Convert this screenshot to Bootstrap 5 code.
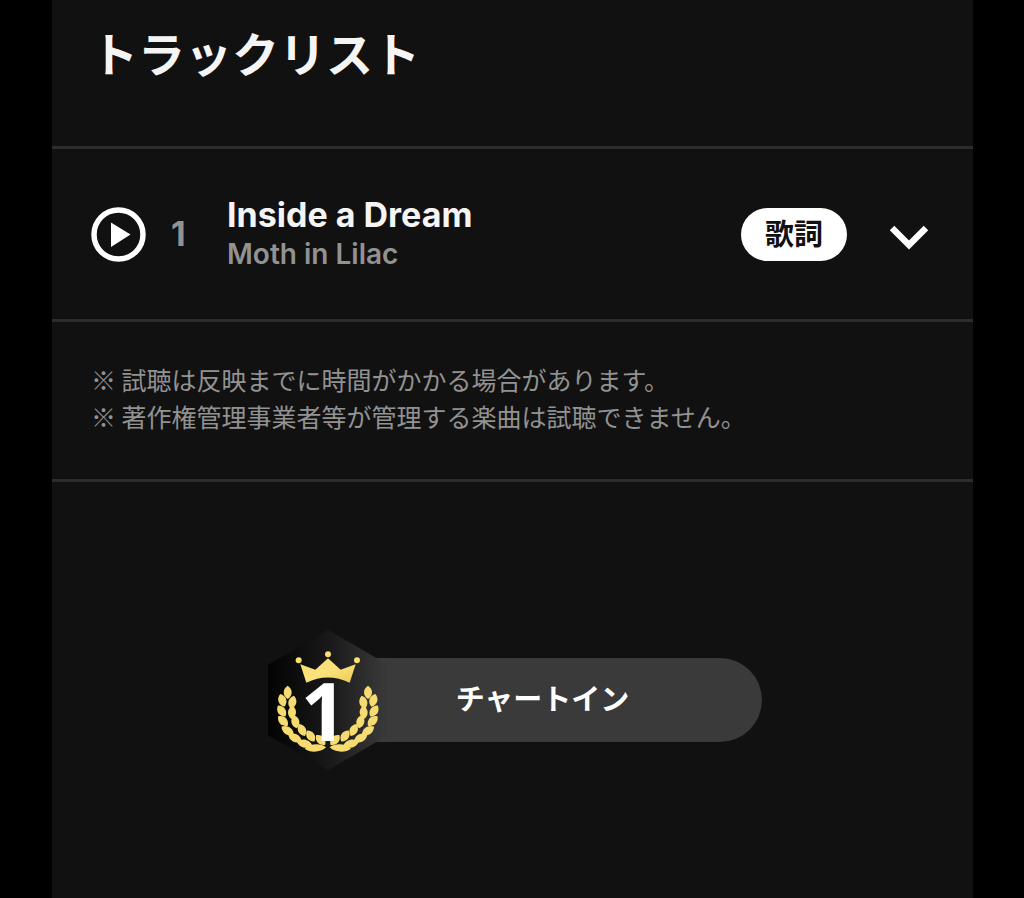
<!DOCTYPE html>
<html lang="ja" data-bs-theme="dark">
<head>
<meta charset="utf-8">
<meta name="viewport" content="width=device-width, initial-scale=1">
<title>トラックリスト</title>
<link href="https://cdn.jsdelivr.net/npm/bootstrap@5.3.0/dist/css/bootstrap.min.css" rel="stylesheet">
<style>
body { background: #000; color: #f5f5f5; font-family: Inter, "Noto Sans CJK JP", sans-serif; }
.page-frame { padding: 0 51px 0 52px; }
.panel { background: #111; }
.rule { border-bottom: 3px solid #2d2d2d; }
.side-pad { padding-left: 39px; padding-right: 45px; }
.heading { font-size: 47px; line-height: 60px; font-weight: 700; color: #f5f5f5; padding-top: 25px; padding-bottom: 61px; }
.track { padding-top: 46px; padding-bottom: 46px; }
.muted { color: #929292; }
.track-no { font-size: 34px; line-height: 40px; font-weight: 700; width: 81px; padding-left: 25px; }
.track-title { font-size: 34px; line-height: 40px; font-weight: 700; }
.track-artist { font-size: 28px; line-height: 38px; font-weight: 600; }
.bare { background: none; border: 0; padding: 0; line-height: 0; color: #fff; }
.lyrics { --bs-btn-color: #111; --bs-btn-bg: #fff; --bs-btn-hover-bg: #ddd; --bs-btn-hover-color: #111; font-size: 29px; line-height: 41px; font-weight: 700; padding: 6px 24px; border: 0; }
.more { margin-left: 43px; }
.notes { font-family: "Noto Sans CJK JP", sans-serif; font-size: 25px; line-height: 37px; padding-top: 39px; padding-bottom: 44px; }
.chart { padding-top: 148px; padding-left: 4px; }
.medal { margin-right: -12px; z-index: 1; }
.chart-label { background: #3a3a3a; border-radius: 0 42px 42px 0; width: 386px; height: 84px; font-size: 29px; font-weight: 700; color: #fff; padding-right: 52px; }
</style>
</head>
<body>
<div class="page-frame">
<main class="panel min-vh-100">
  <h1 class="heading side-pad rule m-0">トラックリスト</h1>
  <section class="track side-pad rule d-flex align-items-center">
    <button class="bare" type="button" aria-label="試聴">
      <svg width="55" height="55" viewBox="0 0 55 55"><circle cx="27.500" cy="27.500" r="24.500" fill="none" stroke="#fff" stroke-width="5.500"/><path d="M20 15.500V40L39.500 27.500Z" fill="#fff"/></svg>
    </button>
    <span class="track-no muted">1</span>
    <div class="flex-grow-1">
      <div class="track-title">Inside a Dream</div>
      <div class="track-artist muted">Moth in Lilac</div>
    </div>
    <button class="btn rounded-pill lyrics" type="button">歌詞</button>
    <button class="bare more" type="button" aria-label="詳細">
      <svg width="38" height="32" viewBox="0 0 38 32"><path d="M2 10 19 27 36 10" fill="none" stroke="#fff" stroke-width="6.500"/></svg>
    </button>
  </section>
  <section class="notes side-pad rule muted">
    <p class="m-0">※ 試聴は反映までに時間がかかる場合があります。</p>
    <p class="m-0">※ 著作権管理事業者等が管理する楽曲は試聴できません。</p>
  </section>
  <section class="chart d-flex justify-content-center align-items-center">
    <svg class="medal position-relative" width="120" height="140" viewBox="24 30 360 420" role="img" aria-label="1">
      <defs>
        <linearGradient id="hex"><stop offset="0" stop-color="#030303"/><stop offset=".5" stop-color="#181818"/><stop offset=".9" stop-color="#343434"/><stop offset="1" stop-color="#3a3a3a"/></linearGradient>
        <linearGradient id="gold" x2="1" y2="1"><stop offset="0" stop-color="#fbdc6a"/><stop offset=".5" stop-color="#fbe27c"/><stop offset="1" stop-color="#eccb55"/></linearGradient>
        <path id="leaf" d="M0-20C16-10 16 10 0 20C-16 10-16-10 0-20Z" fill="#f6dc70"/>
        <g id="branch">
          <use href="#leaf" transform="translate(83 217)"/>
          <use href="#leaf" transform="translate(67 241) rotate(-18)"/>
          <use href="#leaf" transform="translate(65 273) rotate(-34)"/>
          <use href="#leaf" transform="translate(69 303) rotate(-46)"/>
          <use href="#leaf" transform="translate(83 332) rotate(-56) scale(1 1.100)"/>
          <use href="#leaf" transform="translate(105 354) rotate(-64) scale(1 1.100)"/>
          <use href="#leaf" transform="translate(134 371) rotate(-76) scale(1 1.200)"/>
          <use href="#leaf" transform="translate(166 384) rotate(-94) scale(.900 1.600)"/>
          <use href="#leaf" transform="translate(97 247) rotate(14)"/>
          <use href="#leaf" transform="translate(96 277) rotate(4)"/>
          <use href="#leaf" transform="translate(106 305) rotate(-12)"/>
          <use href="#leaf" transform="translate(126 330) rotate(-26)"/>
          <use href="#leaf" transform="translate(152 348) rotate(-34)"/>
          <use href="#leaf" transform="translate(182 360) rotate(-42)"/>
        </g>
      </defs>
      <path d="M204 30 384 134V346L204 450 24 346V134Z" fill="url(#hex)"/>
      <use href="#branch"/>
      <use href="#branch" transform="translate(407 0) scale(-1 1)"/>
      <g fill="url(#gold)">
        <path d="M121 133 166 149 204 115 242 149 287 133 269 188Q204 157 139 188Z"/>
        <circle cx="116" cy="121" r="9"/><circle cx="204" cy="103" r="9"/><circle cx="291" cy="121" r="9"/>
      </g>
      <text x="191" y="363" text-anchor="middle" font-family="Open Sans" font-weight="700" font-size="240" fill="#fff">1</text>
    </svg>
    <div class="chart-label d-flex align-items-center justify-content-center">チャートイン</div>
  </section>
</main>
</div>
<script src="https://cdn.jsdelivr.net/npm/bootstrap@5.3.0/dist/js/bootstrap.bundle.min.js"></script>
</body>
</html>
